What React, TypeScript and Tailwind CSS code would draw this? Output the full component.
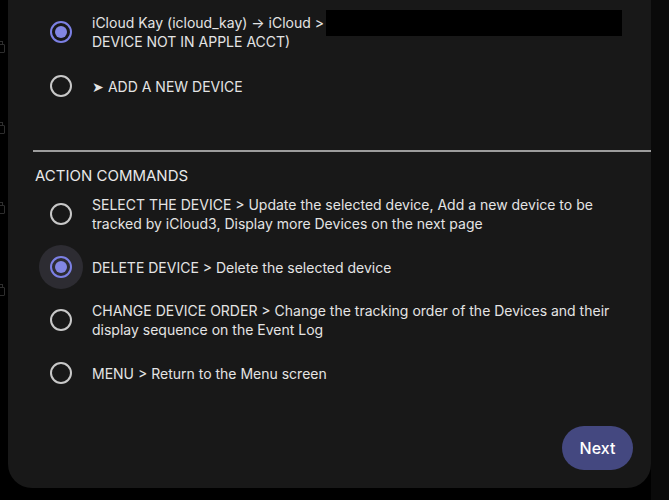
import * as React from "react";

type Option = {
  lines: React.ReactNode;
  checked?: boolean;
  focus?: boolean;
};

const deviceOptions: Option[] = [
  {
    lines: (
      <>
        <span className="flex h-[19px] items-center">
          iCloud Kay (icloud_kay) → iCloud &gt;
          <span className="ml-[2px] inline-block h-[26px] w-[296px] shrink-0 bg-black" />
        </span>
        <span className="block">DEVICE NOT IN APPLE ACCT)</span>
      </>
    ),
    checked: true,
  },
  { lines: "➤ ADD A NEW DEVICE" },
];

const actionOptions: Option[] = [
  {
    lines:
      "SELECT THE DEVICE > Update the selected device, Add a new device to be tracked by iCloud3, Display more Devices on the next page",
  },
  { lines: "DELETE DEVICE > Delete the selected device", checked: true, focus: true },
  {
    lines:
      "CHANGE DEVICE ORDER > Change the tracking order of the Devices and their display sequence on the Event Log",
  },
  { lines: "MENU > Return to the Menu screen" },
];

function Radio({ checked, focus }: { checked?: boolean; focus?: boolean }) {
  return (
    <div
      className={
        "grid h-[44px] w-[44px] shrink-0 place-items-center rounded-full " +
        (focus ? "bg-[#2d2c32]" : "")
      }
    >
      <div
        className={
          "grid h-[22px] w-[22px] place-items-center rounded-full border-2 " +
          (checked ? "border-[#7c80e4]" : "border-[#c8c8c8]")
        }
      >
        {checked && <div className="h-[12px] w-[12px] rounded-full bg-[#8286e2]" />}
      </div>
    </div>
  );
}

function Row({ o }: { o: Option }) {
  return (
    <div className="flex min-h-[44px] items-center gap-[9px]">
      <Radio checked={o.checked} focus={o.focus} />
      <div className="text-[14px] leading-[19px] text-[#e4e4e4]">{o.lines}</div>
    </div>
  );
}

function EdgeIcon() {
  return (
    <div className="relative h-[12px] w-[6px]">
      <div className="absolute left-[-5px] top-[3px] h-[9px] w-[10px] rounded-[1px] border border-[#2e2e2e]" />
      <div className="absolute left-[-1px] top-0 h-[3px] w-[4px] border-x border-t border-[#2e2e2e]" />
    </div>
  );
}

export default function App() {
  return (
    <div
      className="flex h-[500px] w-[669px] overflow-hidden bg-black"
      style={{ fontFamily: "Inter, 'Noto Sans', sans-serif" }}
    >
      <div className="flex w-[8px] shrink-0 flex-col pt-[41px]">
        <EdgeIcon />
        <div className="h-[69px]" />
        <EdgeIcon />
        <div className="h-[68px]" />
        <EdgeIcon />
        <div className="h-[70px]" />
        <EdgeIcon />
      </div>

      <div className="flex h-[488px] w-[643px] shrink-0 flex-col rounded-b-[24px] bg-[#181818]">
        <div className="flex flex-col gap-[10px] pl-[31px] pt-[10px]">
          {deviceOptions.map((o, i) => (
            <Row key={i} o={o} />
          ))}
        </div>

        <div className="ml-[25px] mt-[42px] h-[2px] bg-[#9c9c9c]" />

        <h2 className="ml-[27px] mt-[14px] text-[15px] leading-[20px] text-[#e8e8e8]">
          ACTION COMMANDS
        </h2>

        <div className="mt-[6px] flex flex-col gap-[9px] pl-[31px] pr-[20px]">
          {actionOptions.map((o, i) => (
            <Row key={i} o={o} />
          ))}
        </div>

        <div className="mt-auto flex justify-end pb-[18px] pr-[18px]">
          <button className="h-[44px] w-[71px] rounded-full bg-[#444880] text-[16px] font-medium text-white">
            Next
          </button>
        </div>
      </div>

      <div className="w-[18px] shrink-0 bg-[#0a0a0a]" />
    </div>
  );
}
